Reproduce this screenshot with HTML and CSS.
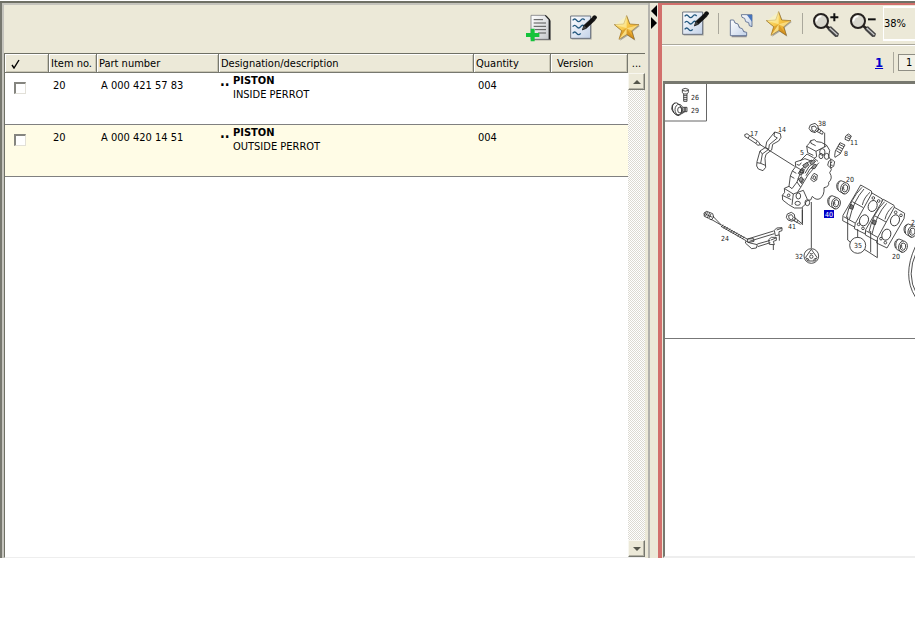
FILE: index.html
```html
<!DOCTYPE html>
<html lang="en">
<head>
<meta charset="utf-8">
<title>Parts list</title>
<link rel="stylesheet" href="styles.css">
</head>
<body>
<svg class="defs" aria-hidden="true">
  <defs>
    <linearGradient id="paper" x1="0" y1="0" x2="1" y2="1"><stop offset="0" stop-color="#fff"/><stop offset="1" stop-color="#c3d2e8"/></linearGradient>
    <linearGradient id="grey" x1="0" y1="0" x2="1" y2="1"><stop offset="0" stop-color="#fff"/><stop offset="1" stop-color="#c4c6ca"/></linearGradient>
    <linearGradient id="gold" x1="0" y1="0" x2="1" y2="1"><stop offset="0" stop-color="#fff3a0"/><stop offset=".5" stop-color="#f6c443"/><stop offset="1" stop-color="#d98a16"/></linearGradient>
    <symbol id="notes" viewBox="165 27 84 84">
      <path d="M173 37h60v67h-60z" fill="#777" opacity=".45"/>
      <path d="M170 33h60v67h-60z" fill="url(#paper)" stroke="#555e6c" stroke-width="2.5"/>
      <path d="M176 46q6-8 12 0t12 0t12-1M176 65q6-8 12 0t12 0t10-1M176 85q6-8 12 0t12 0" fill="none" stroke="#23597f" stroke-width="4"/>
      <path d="M205 75l5-14 26-24 8 8-27 25z" fill="#111" stroke="#111" stroke-width="2"/>
      <path d="M234 36l6-5q9 1 9 8l-6 6z" fill="#111"/>
      <path d="M210 61l7 7-12 6z" fill="#444"/>
    </symbol>
    <symbol id="star" viewBox="294 27 84 84">
      <path d="M337 35l10 25 28 2-22 18 8 27-23-15-23 15 8-27-22-18 28-2z" fill="#555" opacity=".45"/>
      <path d="M335 32l9 25 28 2-22 18 8 26-23-15-23 15 8-26-22-18 28-2z" fill="url(#gold)" stroke="#94691a" stroke-width="2"/>
      <path d="M335 32v38l-35-11zM335 70l37-11-22 18zM335 70l-23 33 23-15z" fill="#fff8b8" opacity=".55"/>
      <path d="M335 70l23 33-23-15zM335 70l-15 7-8 26z" fill="#b87512" opacity=".4"/>
    </symbol>
    <symbol id="lens" viewBox="0 0 84 84">
      <path d="M47 52l10-3 24 22-3 9-8 1-23-22z" fill="#444"/>
      <path d="M53 54l23 21" stroke="#c8c8c8" stroke-width="4"/>
      <circle cx="27" cy="33" r="21" fill="#d9d8ce" stroke="#25211f" stroke-width="6"/>
      <path d="M13 34q2-15 15-15" stroke="#fff" stroke-width="5" fill="none"/>
      <path d="M42 47l9 8" stroke="#25211f" stroke-width="8"/>
    </symbol>
    <g id="ring">
      <path d="M8-15L-5-20Q-19-17-18-2Q-17 9-10 12L5 20"/>
      <ellipse cx="7" cy="3" rx="13" ry="17" transform="rotate(12 7 3)"/>
      <ellipse cx="7" cy="3" rx="8" ry="11" transform="rotate(12 7 3)"/>
      <path d="M3-2q-2 8 3 11M-8-18q-10 8-5 26"/>
    </g>
    <g id="pad">
      <path d="M0 0L32 18L35 34L-11 130L-54 107L-53 91Z"/>
      <path d="M4 7Q-32 42-43 98M28 22Q10 37 5 60M10 12Q-22 48-34 104M-51 95L-10 118L31 33M-25 50L8 68"/>
    </g>
    <g id="plate">
      <path d="M0 0L31 18L29 34L-22 122L-53 107L-50 91Z"/>
      <ellipse cx="2" cy="39" rx="13" ry="17" transform="rotate(22 2 39)"/>
      <ellipse cx="-24" cy="82" rx="13" ry="17" transform="rotate(22 -24 82)"/>
      <circle cx="4" cy="15" r="4"/><circle cx="20" cy="24" r="4"/><circle cx="-40" cy="94" r="4"/><circle cx="-27" cy="106" r="4"/>
    </g>
  </defs>
</svg>

<main class="app">
  <section class="list">
    <div class="toolbar">
      <button class="tool" aria-label="Add to list"><svg viewBox="33 27 84 84">
        <path d="M56 34h43l12 13v59H60z" fill="#444" opacity=".65"/>
        <path d="M51 31h43l12 12v60H51z" fill="url(#grey)" stroke="#62646a" stroke-width="2"/>
        <path d="M94 31l12 13v59" fill="none" stroke="#222" stroke-width="4"/>
        <path d="M59 44h28M59 54h37M59 64h37M63 74h33M72 84h24" stroke="#555" stroke-width="3"/>
        <path d="M50 71h12v13h14v12H62v13H50V96H36V84h14z" fill="#14c33b"/>
      </svg></button>
      <button class="tool" aria-label="Edit note"><svg><use href="#notes"/></svg></button>
      <button class="tool" aria-label="Favourites"><svg><use href="#star"/></svg></button>
    </div>
    <div class="grid">
      <table class="parts">
        <colgroup><col class="c-check"><col class="c-item"><col class="c-part"><col><col class="c-qty"><col class="c-qty"></colgroup>
        <thead>
          <tr><th class="tick" aria-label="Selected"><svg viewBox="0 0 10 10"><path d="M1 6l2 3L8 1" fill="none" stroke="#000" stroke-width="1.4"/></svg></th><th>Item no.</th><th>Part number</th><th>Designation/description</th><th>Quantity</th><th class="version">Version</th></tr>
        </thead>
        <tbody>
          <tr><td class="tick"><input type="checkbox" aria-label="Select A 000 421 57 83"></td><td>20</td><td>A 000 421 57 83</td><td class="desc"><div><span class="dots">..</span><p><b>PISTON</b><br>INSIDE PERROT</p></div></td><td>004</td><td></td></tr>
          <tr><td class="tick"><input type="checkbox" aria-label="Select A 000 420 14 51"></td><td>20</td><td>A 000 420 14 51</td><td class="desc"><div><span class="dots">..</span><p><b>PISTON</b><br>OUTSIDE PERROT</p></div></td><td>004</td><td></td></tr>
        </tbody>
      </table>
      <div class="side">
        <button class="more" aria-label="Columns">...</button>
        <div class="scroll">
          <button class="arrow" aria-label="Scroll up"><svg viewBox="0 0 8 4"><path d="M0 4l4-4 4 4z"/></svg></button>
          <button class="arrow" aria-label="Scroll down"><svg viewBox="0 0 8 4"><path d="M0 0l4 4 4-4z"/></svg></button>
        </div>
      </div>
    </div>
  </section>

  <div class="splitter">
    <button aria-label="Collapse left"><svg viewBox="0 0 6 12"><path d="M6 0v12L0 6z"/></svg></button>
    <button aria-label="Collapse right"><svg viewBox="0 0 6 12"><path d="M0 0v12l6-6z"/></svg></button>
  </div>

  <section class="viewer">
    <div class="tools">
      <button class="tool" aria-label="Edit note"><svg><use href="#notes"/></svg></button>
      <span class="sep"></span>
      <button class="tool" aria-label="Split image"><svg viewBox="249 27 84 84">
        <path d="M260 61l10 2 3 10 10 2 4 12 10 2 8 12v8h-45z" fill="#556" opacity=".6"/>
        <path d="M256 57h10l4 9 9 3 4 11 9 3 4 9 9 2v10h-49z" fill="url(#paper)" stroke="#56678c" stroke-width="2.5"/>
        <path d="M289 41h32v36l-8-3-2-9-9-3-3-10-8-3z" fill="url(#paper)" stroke="#56678c" stroke-width="2.5"/>
        <path d="M306 42h15v20z" fill="#4774bb"/>
      </svg></button>
      <button class="tool" aria-label="Favourites"><svg><use href="#star"/></svg></button>
      <span class="sep"></span>
      <button class="tool" aria-label="Zoom in"><svg viewBox="0 0 84 84"><use href="#lens"/><path d="M55 22h24M67 10v24" stroke="#111" stroke-width="6"/></svg></button>
      <div class="zoom">
        <button class="tool" aria-label="Zoom out"><svg viewBox="0 0 84 84"><use href="#lens"/><path d="M57 28h23" stroke="#111" stroke-width="6"/></svg></button>
        <select aria-label="Zoom level"><option>38%</option></select>
      </div>
    </div>
    <div class="pages">
      <a href="#sheet">1</a>
      <span class="sep"></span>
      <input type="text" value="1" aria-label="Sheet">
    </div>
    <div class="canvas" id="sheet">
      <svg class="drawing" viewBox="665 84 250 254" role="img" aria-label="Brake caliper exploded view">
        <path class="frame" d="M706.5 84v37H665"/>
        <g class="ink" transform="translate(660 75) scale(.33333)">
          <path d="M67 43q8-6 18 0v9l-4 5H71l-4-5zM71 57v22h10V57M71 62h10M71 68h10M71 74h10M67 46q9 5 18 0"/>
          <ellipse cx="51" cy="102" rx="13" ry="19" transform="rotate(-20 51 102)"/><ellipse cx="57" cy="104" rx="12" ry="16"/><ellipse cx="60" cy="105" rx="7" ry="9"/>
          <path d="M45 84Q34 87 35 102Q42 120 57 122M69 97h12v13H69M73 97v13M77 97v13M65 116l9-5"/>
        </g>
        <g class="ink" transform="translate(735 110) scale(.33333)">
          <path d="M29 74l7-3 8 6 26 18 6 9-7 2-7-6-26-17-6-3zM44 77l-5 8M66 94l-4 7M74 103l105 66"/>
          <path d="M119 66L136 71L138 82L131 93L113 103L110 120L93 133L90 145L92 172L84 182L70 177L65 168L66 155L75 123L92 112L95 96Z"/>
          <path d="M117 78L127 84L103 104L101 118L82 132L77 160L66 158M92 112L101 118M82 132L75 123M77 160L91 166M119 66L117 78"/>
          <path d="M226 45l14-5 9 8 1 12-10 8-12-4-6-9zM230 50l10-2 5 8-5 8-9-2zM247 54l18 12-3 7-17-9M252 56l-4 8M258 60l-4 8M269 68v44"/>
          <path d="M332 78l8-6 9 6-7 15-12-5zM334 82l11 5M337 77l11 5M315 98l15 7-8 14-7 13-15 10-1-5 2-14zM312 103l15 7M309 109l15 8M306 115l14 8M304 122l13 8"/>
          <g transform="translate(123 78)">
            <path d="M95 50L92 30L100 22L104 14L115 11L122 17L136 19L152 28L161 43L158 62L165 72L163 90Q170 102 161 110Q172 127 158 139Q161 152 144 155Q146 178 132 188Q120 194 109 181L104 192Q88 192 88 205L76 216L55 216L38 206L20 192L19 178L26 169L25 157L39 151L43 120L49 105L59 92L58 78L74 73L93 54L112 65L126 76"/>
            <path d="M92 31L120 46L152 29M120 46L122 62L114 67M104 14L105 22L119 29M59 92L76 102L89 83L108 72M76 102L63 138L48 158L39 151M26 158L52 174L82 163M52 174L48 207M82 163L94 190M43 120L55 127M49 105L61 112M66 127L77 143L84 128M63 138L74 154L96 117L114 96L129 80M74 154L65 168M19 178L46 191M95 50L112 58"/>
            <path d="M72 74L87 68L108 76M62 85L70 88L76 80M87 112L99 92L114 78M90 119L102 99L120 87"/>
            <path fill="#999" d="M80 88l12-8 7 6-12 11zM67 112l7-11 8 4-6 13zM101 80l12-9 6 5-12 11zM76 98l9 2-3 12-10-3zM68 131l8-9 5 7-6 11zM106 96l9-12 8 4-7 10z"/>
            <path d="M108 120l6-8 10 5-2 15-9 5-9-7zM114 119l5 3-2 9-7-3zM158 76l9-6 9 7-3 14-9 5-9-8zM162 81l7-3M162 87l8 1"/>
            <ellipse cx="139" cy="48" rx="8" ry="10"/><ellipse cx="152" cy="61" rx="7" ry="9"/><ellipse cx="135" cy="60" rx="6" ry="8"/><ellipse cx="67" cy="180" rx="7" ry="9"/><ellipse cx="65" cy="202" rx="8" ry="6"/><ellipse cx="94" cy="200" rx="7" ry="9"/><circle cx="38" cy="178" r="4"/>
          </g>
          <path d="M202 292v47M229 276v138"/>
          <use href="#ring" x="323" y="232"/><use href="#ring" x="296" y="277"/>
        </g>
        <g class="ink" transform="translate(695 195) scale(.33333)">
          <path d="M27 54l8-5 18 7 3 10-7 9-8-5-13-6zM34 50l-6 11M44 53l-7 16M33 58l19 9M38 52l-7 12M48 57l-6 12M53 63l27 28M47 72l31 18M80 90l78 43M78 94l75 43M84 89l-5 7M91 93l-5 7M98 97l-5 7M105 101l-5 7M112 105l-5 7M119 109l-5 7M126 113l-5 7M133 117l-5 7M140 121l-5 7M147 125l-5 7"/>
          <path d="M158 132l78-24M163 139l75-23M157 132l19-1 1 8-18 4zM153 138l12 6 22 5-3 10-14 2-19-17zM187 147l39-11M188 155l38-12"/>
          <path d="M238 106l7-7 16-1v9l-9 3v10l-11 2zM245 105l15-5M253 119v18M221 134l8-7h15v9l-9 3 3 10-15-1zM228 135l15-6M235 149v16"/>
          <path d="M277 57l12-5 9 6 2 13-9 8-12-4-5-8zM281 61l9-2 5 8-5 8-8-4zM298 67l24 20M292 75l25 13M302 70l-4 8M309 75l-4 8M322 45v45"/>
          <circle cx="349" cy="183" r="22"/><circle cx="349" cy="185" r="5"/><path d="M349 163l7 10 10 14-6 11h-22l-6-11 11-16zM335 190a7 7 0 0 1 7 7M363 190a7 7 0 0 0-7 7M343 173a7 7 0 0 0 12 0"/>
        </g>
        <g class="ink" transform="translate(800 170) scale(.33333)">
          <use href="#pad" x="182" y="45"/><use href="#plate" x="216" y="69"/><use href="#pad" x="250" y="88"/><use href="#plate" x="283" y="112"/>
          <path d="M153 103l8 5-3 10-10-3zM221 149l8 5-3 10-10-3z" fill="#777"/>
          <path d="M143 140v70l9 7M173 177v26M212 183v64M232 210v53M193 238l39 25"/>
          <circle cx="173" cy="226" r="24"/>
          <use href="#ring" x="330" y="182"/><use href="#ring" x="302" y="227"/>
          <path d="M346 230Q306 316 346 381M350 244Q317 315 350 372"/>
        </g>
        <path fill="#0000c8" d="M824 210h10v8h-10z"/>
        <g class="labels">
          <text x="691" y="100">26</text><text x="691" y="113">29</text><text x="750" y="136">17</text><text x="778" y="132">14</text><text x="818" y="126">38</text><text x="850" y="145">11</text><text x="844" y="156">8</text><text x="800" y="155">5</text><text x="846" y="182">20</text><text x="788" y="229">41</text><text x="721" y="241">24</text><text x="795" y="259">32</text><text x="854" y="248">35</text><text x="892" y="259">20</text><text x="911" y="225">2</text><text class="hot" x="825" y="217">40</text>
        </g>
      </svg>
    </div>
  </section>
</main>
</body>
</html>
```
FILE: styles.css
```css
* { box-sizing: border-box; }
body {
  margin: 0;
  background: #fff;
  color: #000;
  font: 11px/14px "DejaVu Sans Condensed", "Noto Sans", sans-serif;
}
.defs { position: absolute; width: 0; height: 0; }
button { padding: 0; border: 0; background: none; color: inherit; font: inherit; }
button svg { display: block; }
.app {
  display: grid;
  grid-template-columns: minmax(0, 1fr) 8px 257px;
  height: calc(100vh - 83px);
  margin-top: 1px;
  border-top: 2px solid #6f7065;
  background: #ece9d8;
}
.tool, .tool svg { display: block; width: 28px; height: 28px; flex: none; }

.list {
  display: flex;
  flex-direction: column;
  border-left: 2px solid #77786f;
  border-right: 2px solid #b4b3ad;
  box-shadow: inset 2px 2px #c5c4bd;
}
.toolbar {
  display: flex;
  justify-content: flex-end;
  align-items: center;
  gap: 16px;
  height: 50px;
  padding-right: 7px;
}
.grid {
  display: flex;
  flex: 1;
  margin-left: 2px;
  margin-right: 3px;
  border-left: 1px solid #6f7065;
  border-top: 1px solid #6f7065;
  border-bottom: 1px solid #eee;
  background: #fff;
  align-items: flex-start;
}
.parts {
  flex: 1;
  table-layout: fixed;
  border-collapse: separate;
  border-spacing: 0;
  width: 0;
}
.c-check { width: 44px; }
.c-item { width: 48px; }
.c-part { width: 122px; }
.c-qty { width: 77px; }
th {
  height: 19px;
  padding: 1px 0 0 2px;
  border-right: 1px solid #77786f;
  border-bottom: 1px solid #77786f;
  background: #ece9d8;
  box-shadow: inset 1px 1px #fff, inset -1px -1px #c9c6b4;
  font-weight: normal;
  text-align: left;
  white-space: nowrap;
}
th.version { padding-left: 6px; }
th.tick { padding-left: 6px; }
th svg { display: block; width: 10px; height: 10px; }
td {
  height: 52px;
  padding: 6px 0 0 4px;
  border-bottom: 1px solid #808080;
  vertical-align: top;
}
tbody tr:nth-child(2) td { background: #fffce6; }
td.tick { padding: 9px 0 0 9px; }
td input {
  appearance: none;
  display: block;
  width: 12px;
  height: 12px;
  margin: 0;
  border: 1px solid #e2e0d8;
  border-top: 2px solid #85857f;
  border-left: 2px solid #85857f;
  background: #fff;
}
td.desc { padding: 1px 0 0 1px; }
.desc div { display: flex; }
.desc p { margin: 0; }
.dots { width: 13px; font-size: 14px; font-weight: bold; }
.side {
  display: flex;
  flex-direction: column;
  align-self: stretch;
  width: 17px;
  background: #ece9d8;
}
.more { height: 19px; text-align: center; }
.scroll {
  display: flex;
  flex: 1;
  flex-direction: column;
  justify-content: space-between;
  background: repeating-conic-gradient(#dcdad2 0 25%, #fff 0 50%) 0 0 / 2px 2px;
}
.arrow {
  display: grid;
  place-items: center;
  height: 17px;
  border: 1px solid #f8f7f0;
  border-right-color: #77786f;
  border-bottom-color: #77786f;
  background: #ece9d8;
  box-shadow: inset -1px -1px #b4b2a5;
}
.arrow svg { width: 8px; height: 4px; fill: #55564c; }

.splitter { padding: 2px 0 0 1px; }
.splitter button { display: block; }
.splitter svg { width: 6px; height: 12px; }

.viewer {
  display: flex;
  flex-direction: column;
  min-width: 0;
  overflow: hidden;
  border-top: 2px solid #d2706c;
  border-left: 4px solid #d2706c;
}
.tools {
  display: flex;
  align-items: center;
  gap: 9px;
  height: 40px;
  padding: 0 0 2px 19px;
  border-bottom: 1px solid #aaa89c;
}
.sep { flex: none; width: 1px; height: 21px; background: #aaa89c; }
.zoom { display: flex; align-items: center; gap: 6px; }
.zoom select {
  appearance: none;
  width: 60px;
  height: 35px;
  padding: 0;
  border: 2px solid #fff;
  border-radius: 0;
  border-left-width: 1px;
  background: #ece9d8;
  color: #000;
  font: inherit;
}
.pages {
  display: flex;
  align-items: center;
  gap: 4px;
  height: 36px;
  padding: 0 0 2px 213px;
  border-top: 1px solid #fff;
}
.pages a { width: 14px; flex: none; color: #0000cc; font-size: 13px; font-weight: bold; }
.pages input {
  flex: none;
  width: 40px;
  height: 17px;
  padding: 0 0 0 7px;
  border: 1px solid #8f8e84;
  background: #f3f1e6;
  font: inherit;
}
.canvas {
  flex: 1;
  margin-left: 1px;
  border-top: 3px solid #77786f;
  border-left: 2px solid #77786f;
  border-bottom: 2px solid #eee;
  background: #fff;
}
.drawing { display: block; width: 100%; border-bottom: 1px solid #777; }
.frame { fill: none; stroke: #666; }
.ink { fill: none; stroke: #333; stroke-width: 2.6; stroke-linejoin: round; }
#pad, #plate { fill: #fff; }
.labels { fill: #222; font: 7px "DejaVu Sans Condensed", sans-serif; }
.labels .hot { fill: #fff; }
```
